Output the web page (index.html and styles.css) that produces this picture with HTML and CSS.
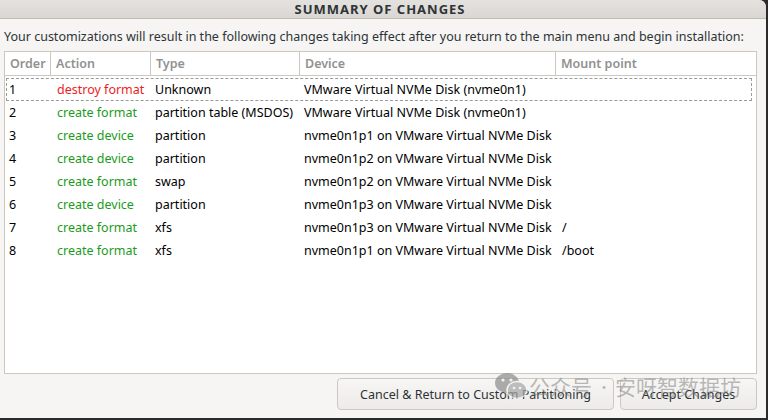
FILE: index.html
```html
<!DOCTYPE html>
<html lang="en">

<head>
    <meta charset="UTF-8">
    <meta name="viewport" content="width=device-width, initial-scale=1.0">
    <title>Summary of Changes</title>
    <link rel="stylesheet" href="styles.css">
</head>

<body>
    <div class="window">
        <div class="titlebar">SUMMARY OF CHANGES</div>
        <div class="content">
            <p class="intro">Your customizations will result in the following changes taking effect after you return to the main menu and begin installation:</p>

            <div class="table">
                <div class="row head">
                    <div class="cell">Order</div>
                    <div class="cell">Action</div>
                    <div class="cell">Type</div>
                    <div class="cell">Device</div>
                    <div class="cell">Mount point</div>
                </div>
                <div class="rows">
                    <div class="row focus">
                        <div class="cell">1</div>
                        <div class="cell destroy">destroy format</div>
                        <div class="cell">Unknown</div>
                        <div class="cell">VMware Virtual NVMe Disk (nvme0n1)</div>
                        <div class="cell"></div>
                    </div>
                    <div class="row">
                        <div class="cell">2</div>
                        <div class="cell create">create format</div>
                        <div class="cell">partition table (MSDOS)</div>
                        <div class="cell">VMware Virtual NVMe Disk (nvme0n1)</div>
                        <div class="cell"></div>
                    </div>
                    <div class="row">
                        <div class="cell">3</div>
                        <div class="cell create">create device</div>
                        <div class="cell">partition</div>
                        <div class="cell">nvme0n1p1 on VMware Virtual NVMe Disk</div>
                        <div class="cell"></div>
                    </div>
                    <div class="row">
                        <div class="cell">4</div>
                        <div class="cell create">create device</div>
                        <div class="cell">partition</div>
                        <div class="cell">nvme0n1p2 on VMware Virtual NVMe Disk</div>
                        <div class="cell"></div>
                    </div>
                    <div class="row">
                        <div class="cell">5</div>
                        <div class="cell create">create format</div>
                        <div class="cell">swap</div>
                        <div class="cell">nvme0n1p2 on VMware Virtual NVMe Disk</div>
                        <div class="cell"></div>
                    </div>
                    <div class="row">
                        <div class="cell">6</div>
                        <div class="cell create">create device</div>
                        <div class="cell">partition</div>
                        <div class="cell">nvme0n1p3 on VMware Virtual NVMe Disk</div>
                        <div class="cell"></div>
                    </div>
                    <div class="row">
                        <div class="cell">7</div>
                        <div class="cell create">create format</div>
                        <div class="cell">xfs</div>
                        <div class="cell">nvme0n1p3 on VMware Virtual NVMe Disk</div>
                        <div class="cell">/</div>
                    </div>
                    <div class="row">
                        <div class="cell">8</div>
                        <div class="cell create">create format</div>
                        <div class="cell">xfs</div>
                        <div class="cell">nvme0n1p1 on VMware Virtual NVMe Disk</div>
                        <div class="cell">/boot</div>
                    </div>
                </div>
            </div>

            <div class="buttons">
                <button class="btn cancel">Cancel &amp; Return to Custom Partitioning</button>
                <button class="btn accept">Accept Changes</button>
            </div>
        </div>

        <!-- 水印 -->
        <div class="mark">
            <svg width="36" height="28" viewBox="0 0 36 28">
                <ellipse cx="14" cy="11" rx="12" ry="10" fill="#8c8c8c" />
                <ellipse cx="24" cy="18" rx="10" ry="8.5" fill="#a6a6a6" stroke="#f6f5f4" stroke-width="1.5" />
                <circle cx="10" cy="8" r="1.6" fill="#f6f5f4" />
                <circle cx="18" cy="8" r="1.6" fill="#f6f5f4" />
                <circle cx="21" cy="16" r="1.3" fill="#f6f5f4" />
                <circle cx="27" cy="16" r="1.3" fill="#f6f5f4" />
            </svg>
            <span>公众号</span>
            <span class="dot">·</span>
            <span>安呀智数据坊</span>
        </div>
    </div>
</body>

</html>
```

FILE: styles.css
```css
* {
    margin: 0;
    padding: 0;
    box-sizing: border-box;
}

body {
    background-color: #2b2b2b;
    font-family: "Noto Sans", "DejaVu Sans", sans-serif;
    font-size: 12.5px;
    color: #2e3436;
    overflow: hidden;
}

.window {
    position: relative;
    width: 766px;
    height: 418px;
    background-color: #f6f5f4;
    border-top-right-radius: 7px;
    overflow: hidden;
    display: flex;
    flex-direction: column;
}

.titlebar {
    height: 19px;
    flex-shrink: 0;
    background: linear-gradient(#e4e2df, #dad7d3);
    border-bottom: 1px solid #bfbab4;
    font-weight: bold;
    font-size: 13px;
    letter-spacing: 1px;
    text-align: center;
    line-height: 18px;
    padding-right: 6px;
}

.content {
    flex: 1;
    display: flex;
    flex-direction: column;
    padding: 8px 9px 8px 4px;
}

.intro {
    line-height: 20px;
    white-space: nowrap;
    margin-bottom: 4px;
}

.table {
    flex: 1;
    background-color: #fff;
    border: 1px solid #cdc7c2;
    display: flex;
    flex-direction: column;
}

.row {
    display: grid;
    grid-template-columns: 46px 100px 149px 256px 1fr;
    height: 23px;
    align-items: center;
}

.row .cell {
    padding-left: 4px;
    white-space: nowrap;
}

.head {
    height: 24px;
    flex-shrink: 0;
    border-bottom: 1px solid #cdc7c2;
    color: #919191;
    font-weight: 600;
}

.head .cell {
    height: 100%;
    line-height: 23px;
    border-right: 1px solid #cdc7c2;
    padding-left: 5px;
}

.head .cell:last-child {
    border-right: none;
}

.rows {
    padding: 2px 4px 0 1px;
}

.rows .row {
    grid-template-columns: 47px 98px 149px 258px 1fr;
    color: #000;
}

.rows .row .cell:first-child {
    padding-left: 3px;
}

.focus {
    outline: 1px dashed #9a9a9a;
    outline-offset: -1px;
}

.destroy {
    color: #ee1c1c;
}

.create {
    color: #1c9a1c;
}

.buttons {
    display: flex;
    justify-content: flex-end;
    gap: 6px;
    padding-top: 4px;
}

.btn {
    height: 32px;
    white-space: nowrap;
    font-family: inherit;
    font-size: 12.5px;
    color: #2e3436;
    background: linear-gradient(#f7f6f5, #edebe9);
    border: 1px solid #cdc7c2;
    border-radius: 4px;
}

.cancel {
    width: 277px;
}

.accept {
    width: 137px;
}

.mark {
    position: absolute;
    left: 493px;
    top: 371px;
    display: flex;
    align-items: center;
    color: rgba(120, 120, 120, 0.5);
    font-family: "Noto Sans CJK SC", sans-serif;
    font-size: 21px;
    pointer-events: none;
}

.mark svg {
    opacity: 0.7;
}

.mark .dot {
    font-size: 14px;
    margin: 0 4px 0 5px;
}
```
